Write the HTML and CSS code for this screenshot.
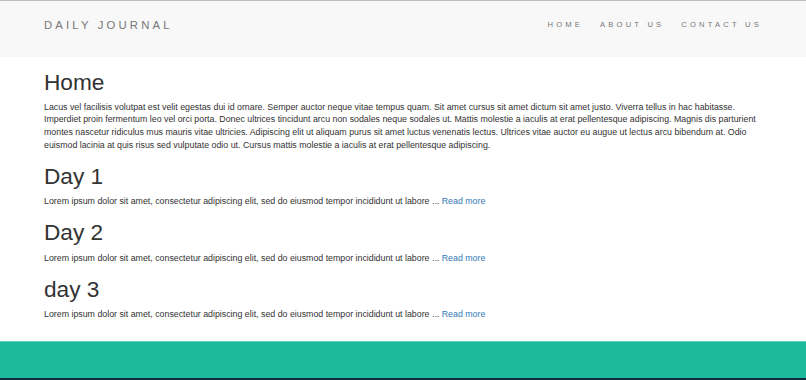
FILE: index.html
```html
<!DOCTYPE html>
<html lang="en">
<head>
<meta charset="utf-8">
<title>Daily Journal</title>
<link rel="stylesheet" href="styles.css">
</head>
<body>
<header class="navbar">
  <div class="container navbar-row">
    <a class="brand" href="#">DAILY JOURNAL</a>
    <nav class="nav">
      <a class="nav-link" href="#">HOME</a>
      <a class="nav-link" href="#">ABOUT US</a>
      <a class="nav-link" href="#">CONTACT US</a>
    </nav>
  </div>
</header>
<main class="container content">
  <h1 class="title">Home</h1>
  <p class="text">Lacus vel facilisis volutpat est velit egestas dui id ornare. Semper auctor neque vitae tempus quam. Sit amet cursus sit amet dictum sit amet justo. Viverra tellus in hac habitasse. Imperdiet proin fermentum leo vel orci porta. Donec ultrices tincidunt arcu non sodales neque sodales ut. Mattis molestie a iaculis at erat pellentesque adipiscing. Magnis dis parturient montes nascetur ridiculus mus mauris vitae ultricies. Adipiscing elit ut aliquam purus sit amet luctus venenatis lectus. Ultrices vitae auctor eu augue ut lectus arcu bibendum at. Odio euismod lacinia at quis risus sed vulputate odio ut. Cursus mattis molestie a iaculis at erat pellentesque adipiscing.</p>
  <h1 class="title">Day 1</h1>
  <p class="text">Lorem ipsum dolor sit amet, consectetur adipiscing elit, sed do eiusmod tempor incididunt ut labore ... <a class="link" href="#">Read more</a></p>
  <h1 class="title">Day 2</h1>
  <p class="text">Lorem ipsum dolor sit amet, consectetur adipiscing elit, sed do eiusmod tempor incididunt ut labore ... <a class="link" href="#">Read more</a></p>
  <h1 class="title">day 3</h1>
  <p class="text">Lorem ipsum dolor sit amet, consectetur adipiscing elit, sed do eiusmod tempor incididunt ut labore ... <a class="link" href="#">Read more</a></p>
</main>
<footer class="footer">
  <div class="footer-band"></div>
  <div class="footer-dark"></div>
</footer>
</body>
</html>
```

FILE: styles.css
```css
html, body {
  margin: 0;
  padding: 0;
}
body {
  font-family: "Liberation Sans", Arial, sans-serif;
  font-size: 8.82px;
  line-height: 12.6px;
  color: #333;
  background: #fff;
}
.container {
  width: 718px;
  margin: 0 auto;
  padding: 0;
}
.navbar {
  background: #f8f8f8;
  border-top: 1px solid #bdbdbd;
  padding-bottom: 8px;
}
.navbar-row {
  height: 48px;
  display: flex;
  align-items: center;
  justify-content: space-between;
}
.brand {
  font-size: 11.34px;
  line-height: 14px;
  letter-spacing: 3.15px;
  color: #777;
  text-decoration: none;
}
.nav {
  display: flex;
  gap: 17px;
}
.nav-link {
  font-size: 7.6px;
  line-height: 10px;
  letter-spacing: 3.2px;
  color: #777;
  text-decoration: none;
}
.content {
  padding-top: 12.6px;
  padding-bottom: 14px;
}
.title {
  font-size: 22.68px;
  line-height: 1.1;
  font-weight: 400;
  margin: 12.6px 0 6.3px;
}
.content .title:first-child {
  margin-top: 0;
}
.text {
  margin: 0 0 6.3px;
}
.link {
  color: #337ab7;
  text-decoration: none;
}
.footer-band {
  height: 37px;
  background: #1dbb9b;
  border-top: 1px solid #5fd6c0;
  box-sizing: border-box;
}
.footer-dark {
  height: 40px;
  background: #0f2c3c;
}
```
